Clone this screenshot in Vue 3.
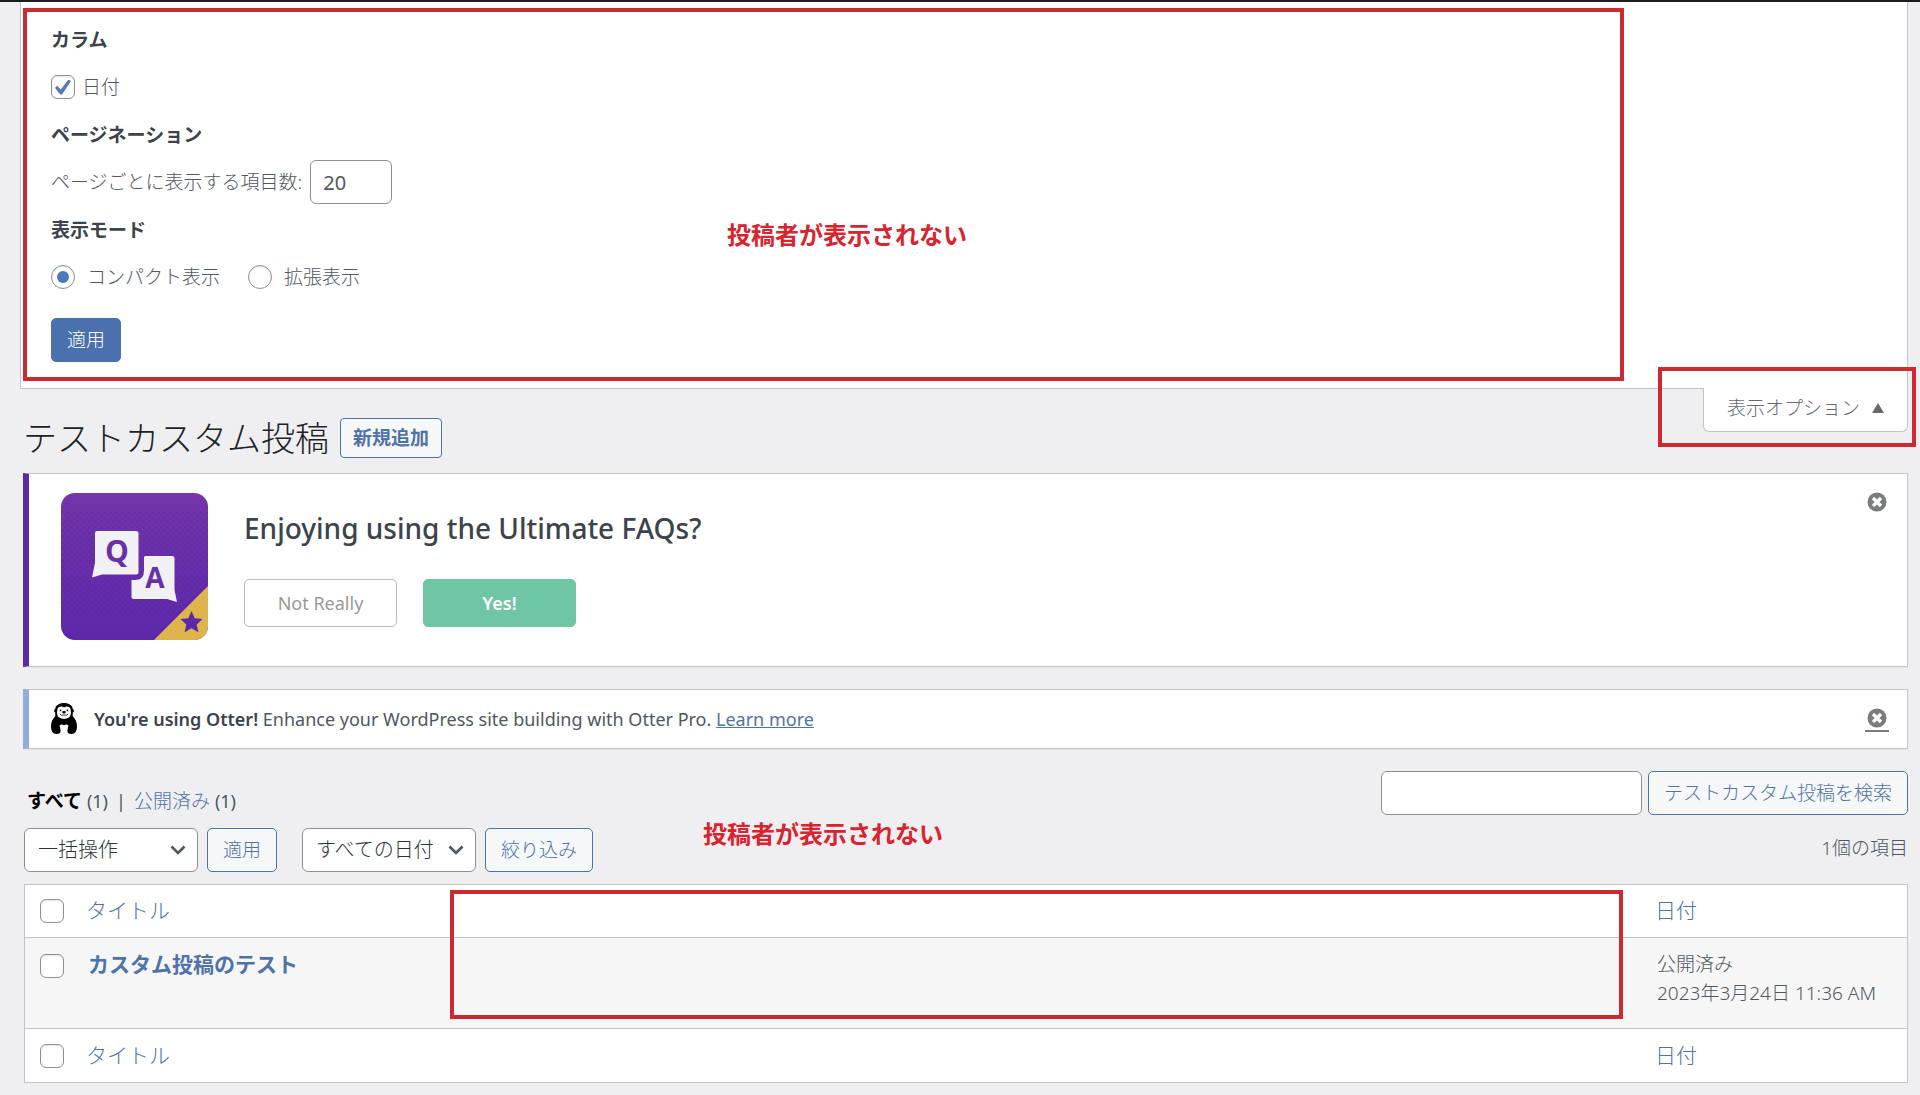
<template>
  <div class="admin">
    <form class="screen-meta" @submit.prevent>
      <div class="option-group">
        <h2 class="option-title">カラム</h2>
        <label class="option-row">
          <input v-model="showDate" type="checkbox" class="check" />
          <span class="check-label">日付</span>
        </label>
      </div>
      <div class="option-group">
        <h2 class="option-title">ページネーション</h2>
        <div class="option-row">
          <label for="per-page">ページごとに表示する項目数:</label>
          <input id="per-page" v-model="perPage" type="number" class="field per-page" />
        </div>
      </div>
      <div class="option-group">
        <h2 class="option-title">表示モード</h2>
        <div class="option-row modes">
          <label v-for="mode in modes" :key="mode.value" class="mode">
            <input v-model="viewMode" type="radio" name="mode" class="radio" :value="mode.value" />
            <span>{{ mode.label }}</span>
          </label>
        </div>
      </div>
      <button type="submit" class="button button-primary">適用</button>

      <div class="mark mark-options"></div>
      <p class="mark-text mark-text-options">投稿者が表示されない</p>
    </form>

    <div class="screen-links">
      <button type="button" class="show-settings">
        表示オプション
        <svg width="12" height="10" viewBox="0 0 12 10"><path d="M6 0 12 10H0z" fill="#646970" /></svg>
      </button>
      <div class="mark mark-toggle"></div>
    </div>

    <main class="wrap">
      <div class="heading">
        <h1>テストカスタム投稿</h1>
        <a href="#" class="page-title-action">新規追加</a>
      </div>

      <section class="notice notice-faq">
        <svg class="faq-logo" viewBox="0 0 147 147">
          <defs>
            <linearGradient id="faq-bg" x1="0" y1="0" x2="0" y2="1">
              <stop offset="0" stop-color="#7436a8" />
              <stop offset="1" stop-color="#5c28ab" />
            </linearGradient>
            <pattern id="faq-dots" width="6" height="6" patternUnits="userSpaceOnUse">
              <circle cx="1.5" cy="1.5" r="1.3" fill="#4f209a" />
              <circle cx="4.5" cy="4.5" r="1.3" fill="#4f209a" />
            </pattern>
            <clipPath id="faq-clip"><rect width="147" height="147" rx="14" /></clipPath>
          </defs>
          <g clip-path="url(#faq-clip)">
            <rect width="147" height="147" fill="url(#faq-bg)" />
            <rect y="18" width="147" height="104" fill="url(#faq-dots)" opacity="0.3" />
            <path d="M147 93V147H93z" fill="#dfb44c" />
          </g>
          <path d="M36 38H75q2.500 0 2.500 2.500V79q0 2.500-2.500 2.500H41L31 84.500 34 70V40q0-2 2-2z" fill="#f1f0f3" />
          <path d="M84.500 63H111q2.500 0 2.500 2.500V97L116 109 106 106H72.500q-2 0-2-2V87H74q9 0 9-9V64.500q0-1.500 1.500-1.500z" fill="#f1f0f3" />
          <text x="56" y="69" class="logo-letter logo-q">Q</text>
          <text x="94" y="95" class="logo-letter logo-a">A</text>
          <path d="M130.500 118l3.200 7.300 7.900.8-5.900 5.300 1.700 7.800-6.900-4-6.900 4 1.700-7.800-5.900-5.300 7.900-.8z" fill="#5c28ab" />
        </svg>
        <div class="faq-body">
          <h3>Enjoying using the Ultimate FAQs?</h3>
          <div class="faq-actions">
            <button type="button" class="faq-button">Not Really</button>
            <button type="button" class="faq-button faq-yes">Yes!</button>
          </div>
        </div>
        <button type="button" class="dismiss" aria-label="Dismiss">
          <svg width="20" height="20" viewBox="0 0 20 20">
            <circle cx="10" cy="10" r="9.500" fill="#787c7a" />
            <path d="M6 6l8 8M14 6l-8 8" stroke="#fff" stroke-width="3.400" />
          </svg>
        </button>
      </section>

      <section class="notice notice-otter">
        <svg class="otter" viewBox="0 0 26 31">
          <path d="M13 0C8 0 4.600 2.500 4.200 6 2.700 6.300 2.700 9.200 4.200 9.600 4.200 11 4.200 12 4.400 13 1.500 15.500 0 19.500 0 23.500 0 28 2 31 5.500 31 8.500 31 10 29.500 9.600 27.400L8.600 22.500Q10.500 20.600 13 22.200 15.500 20.600 17.400 22.500L16.400 27.400C16 29.500 17.500 31 20.500 31 24 31 26 28 26 23.500 26 19.500 24.500 15.500 21.600 13 21.800 12 21.800 11 21.800 9.600 23.300 9.200 23.300 6.300 21.800 6 21.400 2.500 18 0 13 0z" fill="#000" />
          <path d="M13 4.600C11 2.800 7.200 3.400 6.500 6 5.600 9.500 6 13.200 8.200 14.600 10.500 16.300 15.500 16.300 17.800 14.600 20 13.200 20.400 9.500 19.500 6 18.800 3.400 15 2.800 13 4.600z" fill="#fff" />
          <circle cx="9.500" cy="7.300" r="0.900" />
          <circle cx="16.500" cy="7.300" r="0.900" />
          <path d="M11 8.500Q13 7.400 15 8.500 14.800 10.200 13 10.800 11.200 10.200 11 8.500z" />
          <path d="M8.800 11Q10 12.800 13 12 16 12.800 17.200 11" fill="none" stroke="#000" stroke-width="0.800" />
        </svg>
        <p><strong>You're using Otter!</strong> Enhance your WordPress site building with Otter Pro. <a href="#">Learn more</a></p>
        <a href="#" class="dismiss dismiss-link" aria-label="Dismiss">
          <svg width="20" height="20" viewBox="0 0 20 20">
            <circle cx="10" cy="10" r="9.500" fill="#787c7a" />
            <path d="M6 6l8 8M14 6l-8 8" stroke="#fff" stroke-width="3.400" />
          </svg>
        </a>
      </section>

      <div class="list-head">
        <ul class="views">
          <li><a href="#" class="current">すべて</a> <span>(1)</span></li>
          <li class="divider">|</li>
          <li><a href="#">公開済み</a> <span>(1)</span></li>
        </ul>
        <div class="search-box">
          <input v-model="search" type="search" class="field search-input" aria-label="テストカスタム投稿を検索" />
          <button type="button" class="button">テストカスタム投稿を検索</button>
        </div>
      </div>

      <div class="tablenav">
        <div class="select-wrap">
          <select v-model="bulkAction" class="field select" aria-label="一括操作">
            <option>一括操作</option>
          </select>
          <svg class="chevron" viewBox="0 0 16 10"><path d="M1.500 1.500 8 8l6.500-6.500" fill="none" stroke="#50575e" stroke-width="2.600" /></svg>
        </div>
        <button type="button" class="button bulk-apply">適用</button>
        <div class="select-wrap">
          <select v-model="dateFilter" class="field select" aria-label="日付">
            <option>すべての日付</option>
          </select>
          <svg class="chevron" viewBox="0 0 16 10"><path d="M1.500 1.500 8 8l6.500-6.500" fill="none" stroke="#50575e" stroke-width="2.600" /></svg>
        </div>
        <button type="button" class="button">絞り込み</button>
        <span class="item-count">1個の項目</span>
        <p class="mark-text mark-text-list">投稿者が表示されない</p>
      </div>

      <div class="table-wrap">
        <table class="posts">
          <thead>
            <tr>
              <td class="col-check"><input type="checkbox" class="check" aria-label="すべて選択" /></td>
              <th scope="col"><a href="#">タイトル</a></th>
              <th scope="col" class="col-date"><a href="#">日付</a></th>
            </tr>
          </thead>
          <tbody>
            <tr v-for="post in posts" :key="post.id">
              <td class="col-check"><input type="checkbox" class="check" :aria-label="post.title" /></td>
              <td class="title"><a href="#">{{ post.title }}</a></td>
              <td class="date">{{ post.status }}<br />{{ post.date }}</td>
            </tr>
          </tbody>
          <tfoot>
            <tr>
              <td class="col-check"><input type="checkbox" class="check" aria-label="すべて選択" /></td>
              <th scope="col"><a href="#">タイトル</a></th>
              <th scope="col" class="col-date"><a href="#">日付</a></th>
            </tr>
          </tfoot>
        </table>
        <div class="mark mark-table"></div>
      </div>
    </main>
  </div>
</template>

<script setup>
import { ref } from 'vue'

const showDate = ref(true)
const perPage = ref(20)
const viewMode = ref('list')
const search = ref('')
const bulkAction = ref('一括操作')
const dateFilter = ref('すべての日付')

const modes = [
  { value: 'list', label: 'コンパクト表示' },
  { value: 'excerpt', label: '拡張表示' }
]

const posts = ref([
  { id: 1, title: 'カスタム投稿のテスト', status: '公開済み', date: '2023年3月24日 11:36 AM' }
])
</script>

<style>
body {
  background: #efeff1;
}
</style>

<style scoped>
.admin {
  border-top: 2px solid #1d1d21;
  padding: 0 12px 12px 20px;
  font-family: "Noto Sans", "Noto Sans CJK JP", sans-serif;
  font-size: 19px;
  font-weight: 300;
  line-height: 28px;
  color: #50575e;
}

.admin *,
.admin *::before {
  box-sizing: border-box;
}

h1,
h2,
h3,
p,
ul {
  margin: 0;
  padding: 0;
}

button,
input,
select {
  font: inherit;
  margin: 0;
}

a {
  color: #4f73a8;
}

/* 表示オプション */
.screen-meta {
  position: relative;
  background: #fff;
  border: 1px solid #c3c4c7;
  border-top: 0;
  padding: 14px 30px 26px;
}

.option-title {
  display: flex;
  align-items: center;
  height: 47px;
  font-size: 19px;
  font-weight: 600;
  color: #3c434a;
}

.option-row {
  display: flex;
  align-items: center;
  height: 48px;
}

.check-label {
  margin-left: 7px;
}

.modes {
  gap: 28px;
}

.mode {
  display: flex;
  align-items: center;
  gap: 12px;
}

.check,
.radio {
  appearance: none;
  display: grid;
  place-items: center;
  flex: none;
  width: 24px;
  height: 24px;
  border: 1px solid #8c8f94;
  border-radius: 6px;
  background: #fff;
  box-shadow: inset 0 1px 2px rgba(0, 0, 0, 0.1);
}

.check:checked::before {
  content: "";
  width: 16px;
  height: 15px;
  background: #5579b4;
  clip-path: polygon(0 55%, 14% 42%, 36% 66%, 84% 0, 100% 10%, 44% 100%, 32% 100%);
}

.radio {
  border-radius: 50%;
}

.radio:checked::before {
  content: "";
  width: 12px;
  height: 12px;
  border-radius: 50%;
  background: #4f78b8;
}

.field {
  height: 44px;
  border: 1px solid #8c8f94;
  border-radius: 6px;
  background: #fff;
  color: #2c3338;
}

.per-page {
  width: 82px;
  margin-left: 8px;
  padding: 0 12px;
  font-size: 20px;
  font-weight: 400;
  color: #50575e;
}

.button {
  height: 44px;
  padding: 0 15px;
  border: 1px solid #4f73a8;
  border-radius: 5px;
  background: #f6f7f9;
  color: #4f73a8;
  white-space: nowrap;
}

.button-primary {
  display: block;
  margin-top: 17px;
  background: #4a70ad;
  border-color: #4a70ad;
  color: #fff;
}

.screen-links {
  position: relative;
  display: flex;
  justify-content: flex-end;
}

.show-settings {
  display: flex;
  align-items: center;
  gap: 12px;
  height: 44px;
  margin-top: -1px;
  padding: 0 23px 3px;
  border: 1px solid #c3c4c7;
  border-top: 0;
  border-radius: 0 0 6px 6px;
  background: #fff;
  color: #646970;
}

/* 見出し */
.wrap {
  padding-left: 3px;
}

.heading {
  display: flex;
  align-items: center;
  gap: 11px;
  margin-top: -14px;
  height: 40px;
}

.heading h1 {
  font-size: 34px;
  font-weight: 300;
  line-height: 40px;
  color: #1d2327;
}

.page-title-action {
  display: flex;
  align-items: center;
  height: 40px;
  padding: 0 12px;
  border: 1px solid #4f73a8;
  border-radius: 4px;
  background: #f6f7f9;
  font-weight: 600;
  text-decoration: none;
}

/* お知らせ */
.notice {
  position: relative;
  display: flex;
  background: #fff;
  border: 1px solid #c3c4c7;
  box-shadow: 0 1px 1px rgba(0, 0, 0, 0.04);
  font-weight: 400;
}

.notice-faq {
  margin-top: 15px;
  padding: 19px 32px 26px;
  gap: 36px;
  border-left: 6px solid #5a2ba5;
}

.faq-logo {
  flex: none;
  width: 147px;
  height: 147px;
}

.logo-letter {
  font-family: "Open Sans", sans-serif;
  font-weight: 700;
  text-anchor: middle;
  fill: #6a30a8;
}

.logo-q {
  font-size: 30px;
}

.logo-a {
  font-size: 28px;
}

.faq-body h3 {
  margin-top: 15px;
  font-size: 28px;
  font-weight: 500;
  line-height: 40px;
  color: #3c434a;
}

.faq-actions {
  display: flex;
  gap: 26px;
  margin-top: 31px;
}

.faq-button {
  width: 153px;
  height: 48px;
  border: 1px solid #bbb;
  border-radius: 5px;
  background: #fff;
  font-size: 18px;
  color: #999;
}

.faq-yes {
  border-color: #6ec6a4;
  background: #6ec6a4;
  font-weight: 600;
  color: #fff;
}

.dismiss {
  position: absolute;
  top: 18px;
  right: 18px;
  display: flex;
  justify-content: center;
  width: 24px;
  padding: 0;
  border: 0;
  background: none;
}

.notice-otter {
  align-items: center;
  gap: 17px;
  margin-top: 22px;
  padding: 13px 22px 14px;
  border-left: 6px solid #8fadd8;
  font-size: 18px;
}

.otter {
  flex: none;
  width: 26px;
  height: 31px;
}

.notice-otter strong {
  font-weight: 600;
  color: #3c434a;
}

.dismiss-link {
  padding-bottom: 2px;
  border-bottom: 2px solid #787c7a;
}

/* 一覧の上部 */
.list-head {
  display: flex;
  justify-content: space-between;
  margin-top: 22px;
}

.views {
  display: flex;
  gap: 8px;
  margin-top: 16px;
  padding-left: 4px;
  list-style: none;
  font-size: 19px;
}

.views a {
  text-decoration: none;
}

.views .current {
  font-weight: 700;
  color: #000;
}

.views span,
.views .divider {
  font-size: 18px;
  font-weight: 400;
}

.search-box {
  display: flex;
  gap: 6px;
}

.search-input {
  width: 261px;
  padding: 0 12px;
}

.tablenav {
  position: relative;
  display: flex;
  align-items: center;
  margin-top: 13px;
  padding-left: 1px;
}

.select-wrap {
  position: relative;
  margin-right: 9px;
}

.select {
  appearance: none;
  width: 174px;
  padding: 0 32px 0 13px;
  font-size: 20px;
}

.chevron {
  position: absolute;
  top: 17px;
  right: 12px;
  width: 16px;
  height: 10px;
  pointer-events: none;
}

.bulk-apply {
  margin-right: 25px;
}

.item-count {
  margin-bottom: 4px;
  margin-left: auto;
}

/* 投稿一覧 */
.table-wrap {
  position: relative;
  margin-top: 12px;
  padding-left: 1px;
}

.posts {
  width: 100%;
  border: 1px solid #c3c4c7;
  border-spacing: 0;
  background: #fff;
  text-align: left;
}

.posts th {
  height: 53px;
  padding: 0 0 2px;
  font-size: 21px;
  font-weight: 300;
}

.posts td {
  padding: 0;
}

.posts a {
  text-decoration: none;
}

.posts thead td,
.posts thead th {
  border-bottom: 1px solid #c3c4c7;
}

.posts tfoot td,
.posts tfoot th {
  border-top: 1px solid #c3c4c7;
}

.posts tfoot th {
  height: 54px;
}

.posts .col-check {
  width: 61px;
  padding-left: 15px;
}

.posts .col-date {
  width: 252px;
}

.posts tbody td {
  height: 90px;
  padding-top: 12px;
  background: #f6f6f7;
  vertical-align: top;
}

.posts tbody .col-check {
  padding-top: 16px;
}

.posts .title {
  padding-left: 2px;
  font-size: 21px;
  font-weight: 600;
}

.posts .date {
  padding-left: 2px;
  line-height: 29px;
}

/* 赤枠の注釈 */
.mark {
  position: absolute;
  border: 4px solid #cb2a33;
  pointer-events: none;
}

.mark-options {
  top: 6px;
  right: 283px;
  bottom: 7px;
  left: 2px;
}

.mark-toggle {
  top: -22px;
  right: -8px;
  width: 258px;
  height: 80px;
}

.mark-table {
  top: 6px;
  right: 285px;
  bottom: 64px;
  left: 427px;
}

.mark-text {
  position: absolute;
  font-size: 24px;
  font-weight: 700;
  line-height: 32px;
  color: #d9232e;
  white-space: nowrap;
}

.mark-text-options {
  top: 217px;
  left: 706px;
}

.mark-text-list {
  top: -10px;
  left: 680px;
}
</style>
